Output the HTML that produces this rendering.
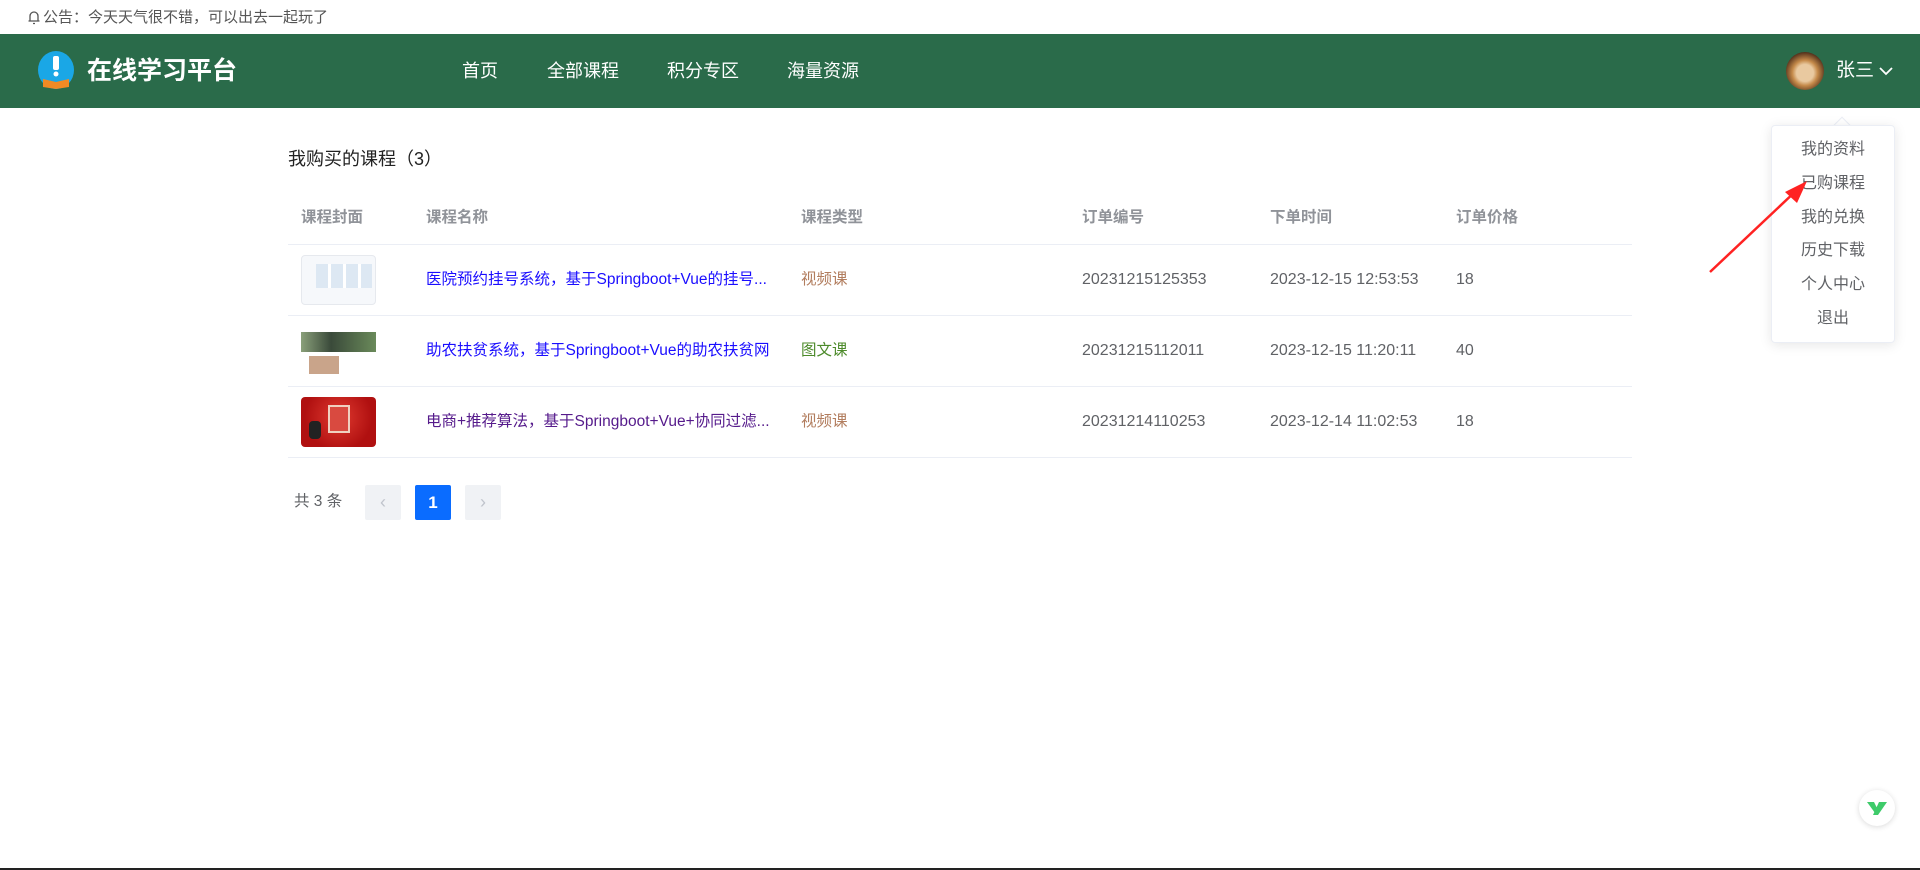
<!DOCTYPE html>
<html><head><meta charset="utf-8"><style>
*{margin:0;padding:0;box-sizing:border-box}
body{width:1920px;height:870px;overflow:hidden;background:#fff;font-family:"Liberation Sans","Noto Sans CJK SC",sans-serif;position:relative;color:#606266}
.ann{position:absolute;left:43px;top:8px;font-size:15px;color:#555;height:20px;line-height:20px}
.nav{position:absolute;left:0;top:34px;width:1920px;height:74px;background:#2a6b4a;color:#fff}
.logo{position:absolute;left:37px;top:17px}
.ltxt{position:absolute;left:87px;top:20px;font-size:25px;font-weight:bold;line-height:34px}
.ni{position:absolute;top:24px;font-size:18px;line-height:26px}
.av{position:absolute;left:1786px;top:18px;width:38px;height:38px;border-radius:50%;background:radial-gradient(circle at 50% 55%,#e9c9a0 0 30%,#c58a4a 45%,#4a2a18 75%)}
.uname{position:absolute;left:1836px;top:24px;font-size:19px;line-height:26px}
.dd{position:absolute;left:1771px;top:125px;width:124px;height:218px;background:#fff;border:1px solid #ebeef5;border-radius:4px;box-shadow:0 2px 12px rgba(0,0,0,.1)}
.dd div{position:absolute;left:0;width:100%;text-align:center;font-size:16px;color:#606266;line-height:20px}
.tri{position:absolute;left:1836px;top:119px;width:12px;height:12px;background:#fff;transform:rotate(45deg);border-left:1px solid #ebeef5;border-top:1px solid #ebeef5}
.title{position:absolute;left:288px;top:147px;font-size:18px;color:#222;line-height:24px}
.hl{position:absolute;left:288px;width:1344px;height:1px;background:#ebeef5}
.c{position:absolute;font-size:16px;line-height:20px;white-space:nowrap}
.n{font-size:15.5px}
.h{color:#909399;font-weight:bold;top:208px;font-size:15.5px}
.th{position:absolute;left:301px;width:75px;height:50px;border-radius:4px;overflow:hidden}
.pg{position:absolute;top:485px;width:36px;height:35px;border-radius:2px;background:#f0f2f5;color:#c0c4cc;text-align:center;line-height:35px;font-size:18px}
</style></head><body>
<svg style="position:absolute;left:27px;top:10px" width="14" height="16" viewBox="0 0 14 16"><path d="M3 11 V6 a4 4 0 0 1 8 0 V11 H3 M1.5 11 H12.5 M6 13.5 H8" stroke="#555" stroke-width="1.3" fill="none"/></svg>
<div class="ann">公告：今天天气很不错，可以出去一起玩了</div>
<div class="nav">
 <svg class="logo" width="38" height="40" viewBox="0 0 38 40"><ellipse cx="19" cy="19" rx="18" ry="19" fill="#1aa7e6"/><rect x="16" y="5" width="6" height="14" rx="2" fill="#fff"/><circle cx="19" cy="23" r="2.5" fill="#fff"/><path d="M6 28 L19 31 L32 28 L32 36 L19 38 L6 36Z" fill="#f08a24"/></svg>
 <div class="ltxt">在线学习平台</div>
 <div class="ni" style="left:462px">首页</div>
 <div class="ni" style="left:547px">全部课程</div>
 <div class="ni" style="left:667px">积分专区</div>
 <div class="ni" style="left:787px">海量资源</div>
 <div class="av"></div>
 <div class="uname">张三</div>
 <svg style="position:absolute;left:1878px;top:32px" width="16" height="10" viewBox="0 0 16 10"><path d="M2 2 L8 8 L14 2" stroke="#fff" stroke-width="1.8" fill="none"/></svg>
</div>
<div class="tri"></div>
<div class="dd">
 <div style="top:14px">我的资料</div>
 <div style="top:48px">已购课程</div>
 <div style="top:82px">我的兑换</div>
 <div style="top:115px">历史下载</div>
 <div style="top:149px">个人中心</div>
 <div style="top:183px">退出</div>
</div>
<svg style="position:absolute;left:1700px;top:175px" width="120" height="110"><path d="M10 97 L98 14" stroke="#f22" stroke-width="2.5"/><path d="M107 6 L85 17 L97 28Z" fill="#f22"/></svg>

<div class="title">我购买的课程（3）</div>
<div class="c h" style="left:301px">课程封面</div>
<div class="c h" style="left:426px">课程名称</div>
<div class="c h" style="left:801px">课程类型</div>
<div class="c h" style="left:1082px">订单编号</div>
<div class="c h" style="left:1270px">下单时间</div>
<div class="c h" style="left:1456px">订单价格</div>
<div class="hl" style="top:244px"></div>
<div class="hl" style="top:315px"></div>
<div class="hl" style="top:386px"></div>
<div class="hl" style="top:457px"></div>

<div class="th" style="top:255px;background:#f6f8fb;border:1px solid #e6e9ee"><div style="position:absolute;left:14px;top:8px;width:56px;height:24px;background:repeating-linear-gradient(90deg,#dde8f3 0 12px,#fff 12px 15px)"></div></div>
<div class="c n" style="left:426px;top:270px;color:#1a0dff">医院预约挂号系统，基于Springboot+Vue的挂号...</div>
<div class="c n" style="left:801px;top:270px;color:#b27d5e">视频课</div>
<div class="c" style="left:1082px;top:270px">20231215125353</div>
<div class="c" style="left:1270px;top:270px">2023-12-15 12:53:53</div>
<div class="c" style="left:1456px;top:270px">18</div>

<div class="th" style="top:326px;background:#fff"><div style="position:absolute;left:0;top:6px;width:75px;height:20px;background:linear-gradient(90deg,#8aa07a,#3a4a3a 40%,#6a8a5a)"></div><div style="position:absolute;left:8px;top:30px;width:30px;height:18px;background:#c9a48a"></div></div>
<div class="c n" style="left:426px;top:341px;color:#1a0dff">助农扶贫系统，基于Springboot+Vue的助农扶贫网</div>
<div class="c n" style="left:801px;top:341px;color:#4c8a2a">图文课</div>
<div class="c" style="left:1082px;top:341px">20231215112011</div>
<div class="c" style="left:1270px;top:341px">2023-12-15 11:20:11</div>
<div class="c" style="left:1456px;top:341px">40</div>

<div class="th" style="top:397px;background:radial-gradient(circle at 50% 40%,#e03a30,#b01010 70%)"><div style="position:absolute;left:27px;top:8px;width:22px;height:28px;background:#d94a40;border:2px solid #f0d0c0"></div><div style="position:absolute;left:8px;top:24px;width:12px;height:18px;background:#222;border-radius:4px"></div></div>
<div class="c n" style="left:426px;top:412px;color:#551a8b">电商+推荐算法，基于Springboot+Vue+协同过滤...</div>
<div class="c n" style="left:801px;top:412px;color:#b27d5e">视频课</div>
<div class="c" style="left:1082px;top:412px">20231214110253</div>
<div class="c" style="left:1270px;top:412px">2023-12-14 11:02:53</div>
<div class="c" style="left:1456px;top:412px">18</div>

<div class="c n" style="left:294px;top:492px;color:#606266">共 3 条</div>
<div class="pg" style="left:365px">‹</div>
<div class="pg" style="left:415px;background:#0a6cff;color:#fff;font-weight:bold;font-size:17px">1</div>
<div class="pg" style="left:465px">›</div>

<div style="position:absolute;left:1859px;top:790px;width:36px;height:36px;border-radius:50%;background:#fff;box-shadow:0 1px 6px rgba(0,0,0,.15)"><svg width="36" height="36" viewBox="0 0 36 36"><path d="M8 12 L15 12 L18 18 L16 23Z" fill="#3ecb6a"/><path d="M20 12 L28 12 L19 25 L14 25Z" fill="#3ecb6a"/></svg></div>
<div style="position:absolute;left:0;top:868px;width:1920px;height:2px;background:#222"></div>
</body></html>
